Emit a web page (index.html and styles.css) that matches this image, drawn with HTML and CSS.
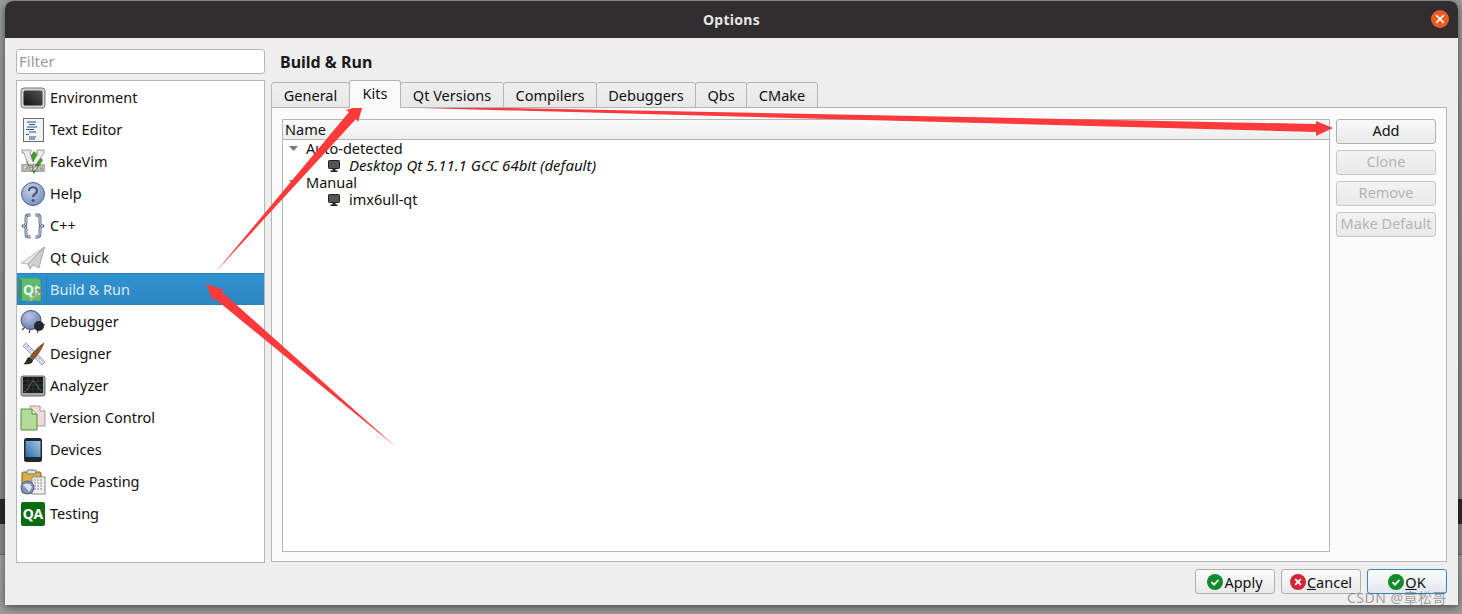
FILE: index.html
```html
<!DOCTYPE html>
<html lang="en">
<head>
<meta charset="utf-8">
<title>Options</title>
<link rel="stylesheet" href="styles.css">
</head>
<body>
<div class="window">
  <header class="titlebar">
    <span class="title">Options</span>
    <span class="close"><svg width="18" height="18" viewBox="0 0 18 18"><circle cx="9" cy="9" r="9" fill="#ee5a24"/><path d="M5.600 5.600l6.800 6.800M12.400 5.600l-6.800 6.800" stroke="#fff" stroke-width="1.600" stroke-linecap="round"/></svg></span>
  </header>
  <div class="content">
    <div class="top">
      <aside class="sidebar">
        <input class="filter" placeholder="Filter">
        <ul class="cats">
          <li class="cat"><span class="ico"><svg width="26" height="22" viewBox="0 0 26 22"><defs><linearGradient id="scr" x1="0" y1="1" x2="1" y2="0"><stop offset="0" stop-color="#111"/><stop offset="1" stop-color="#555"/></linearGradient></defs><rect x="1" y="1" width="24" height="20" rx="3" fill="#d4d4d4" stroke="#777"/><rect x="3.500" y="3.500" width="19" height="15" rx="1.500" fill="url(#scr)"/></svg></span>Environment</li>
          <li class="cat"><span class="ico"><svg width="24" height="26" viewBox="0 0 24 26"><rect x="2.500" y="1.500" width="20" height="23" fill="#f3f3f3" stroke="#6d6d6d"/><path d="M6 5h9M8 7.500h6M6 10h10M5 12.500h8M8 15h7M5 17.500h3M8 20h7M8 22h6" stroke="#2f4f95" stroke-width="1.100"/></svg></span>Text Editor</li>
          <li class="cat"><span class="ico"><svg width="26" height="26" viewBox="0 0 26 26"><path d="M14 2l9 9-9 14-8-12z" fill="#3f9f22"/><path d="M2 1h9v2l-1 1 3 9 5-9-1-1V1h7v3l-9 13h-6L4 4H2z" fill="#ececec" stroke="#777" stroke-width=".7"/><rect x="1" y="15" width="24" height="8" fill="#666" opacity=".5"/><text class="fake" x="13" y="22" text-anchor="middle">Fake</text></svg></span>FakeVim</li>
          <li class="cat"><span class="ico"><svg width="26" height="26" viewBox="0 0 26 26"><defs><radialGradient id="hb" cx=".4" cy=".3" r=".8"><stop offset="0" stop-color="#c9d4ea"/><stop offset="1" stop-color="#7088bb"/></radialGradient></defs><circle cx="13" cy="13" r="11.500" fill="url(#hb)" stroke="#53658f"/><path d="M9 10c0-5 8-5 8 0 0 3-4 3-4 6" fill="none" stroke="#4a5573" stroke-width="2.200"/><circle cx="13" cy="19.500" r="1.500" fill="#4a5573"/></svg></span>Help</li>
          <li class="cat"><span class="ico"><svg width="24" height="26" viewBox="0 0 24 26"><g fill="none" stroke-linejoin="round"><path d="M9.500 2H7.500C5.500 2 5 3.500 5 5v5c0 1.500-1 3-3 3 2 0 3 1.500 3 3v5c0 1.500.5 3 2.500 3h2M14.500 2h2C18.500 2 19 3.500 19 5v5c0 1.500 1 3 3 3-2 0-3 1.500-3 3v5c0 1.500-.5 3-2.500 3h-2" stroke="#55618a" stroke-width="2.800"/><path d="M9.500 2H7.500C5.500 2 5 3.500 5 5v5c0 1.500-1 3-3 3 2 0 3 1.500 3 3v5c0 1.500.5 3 2.500 3h2M14.500 2h2C18.500 2 19 3.500 19 5v5c0 1.500 1 3 3 3-2 0-3 1.500-3 3v5c0 1.500-.5 3-2.500 3h-2" stroke="#dfe4ee" stroke-width="1"/></g></svg></span>C++</li>
          <li class="cat"><span class="ico"><svg width="26" height="24" viewBox="0 0 26 24"><path d="M24.500 1L1 17l7 1z" fill="#e9e9e9" stroke="#aaa" stroke-width=".8"/><path d="M24.500 1L8 18l2 5 3-4 6 3z" fill="#cfcfcf" stroke="#999" stroke-width=".8"/></svg></span>Qt Quick</li>
          <li class="cat sel"><span class="ico"><svg width="26" height="26" viewBox="0 0 26 26"><path d="M1 1h19l3 3v20H4l-3-3z" fill="#5fbb70" stroke="#3f9256" stroke-width=".6"/><path d="M1 1l3 3v20l-3-3z" fill="#3f9256"/><text class="qt" x="5" y="18">Qt</text><path d="M12 24l10-10" stroke="#b8a98e" stroke-width="2.200"/><path d="M19 12l5 5" stroke="#888" stroke-width="2"/></svg></span>Build &amp; Run</li>
          <li class="cat"><span class="ico"><svg width="26" height="26" viewBox="0 0 26 26"><defs><radialGradient id="bug" cx=".4" cy=".3" r=".8"><stop offset="0" stop-color="#b9c8e4"/><stop offset="1" stop-color="#5b72a6"/></radialGradient></defs><path d="M5 18l-3 3M10 21l-1 3M17 21l1 3M21 15l4 1" stroke="#444" stroke-width="1.200"/><ellipse cx="11" cy="11" rx="10" ry="9.500" fill="url(#bug)" stroke="#44557f"/><circle cx="19" cy="17" r="5" fill="#24272e"/></svg></span>Debugger</li>
          <li class="cat"><span class="ico"><svg width="26" height="26" viewBox="0 0 26 26"><path d="M3 5l3-3 19 19-3 3z" fill="#d5dde8" stroke="#9aa5b5"/><path d="M7 6l2-2M10 9l2-2M13 12l2-2M16 15l2-2M19 18l2-2" stroke="#8793a5"/><path d="M24 2c-5 3-11 9-14 14l3 3C17 15 22 8 24 2z" fill="#8a5a2b" stroke="#5e3a18" stroke-width=".6"/><path d="M9 16c-3 1-2 5-6 7 5 1 10 0 10-4z" fill="#2b2a28"/></svg></span>Designer</li>
          <li class="cat"><span class="ico"><svg width="26" height="24" viewBox="0 0 26 24"><rect x="1" y="2" width="24" height="20" rx="2" fill="#a8a8a8" stroke="#666"/><rect x="3" y="3" width="20" height="16" fill="#1a1c1e"/><path d="M3 7h20M3 11h20M3 15h20M8 3v16M13 3v16M18 3v16" stroke="#3b4a44" stroke-width=".6"/><path d="M4 18c5-1 6-10 9-11 3 0 4 8 9 10" fill="none" stroke="#6f7f78" stroke-width=".8"/></svg></span>Analyzer</li>
          <li class="cat"><span class="ico"><svg width="26" height="26" viewBox="0 0 26 26"><path d="M10 1h10l5 5v15H10z" fill="#ecdcdc" stroke="#a99"/><path d="M20 1v5h5" fill="#fff" stroke="#a99"/><path d="M1 4h11l5 5v16H1z" fill="#b3dc97" stroke="#5c8a49"/><path d="M12 4v5h5" fill="#e2f2d6" stroke="#5c8a49"/></svg></span>Version Control</li>
          <li class="cat"><span class="ico"><svg width="20" height="26" viewBox="0 0 20 26"><defs><linearGradient id="dev" x1="0" y1="1" x2="1" y2="0"><stop offset="0" stop-color="#2e6ea8"/><stop offset="1" stop-color="#9cc6e6"/></linearGradient></defs><rect x="1" y="1" width="18" height="24" rx="2.500" fill="#23272c"/><rect x="2.500" y="4" width="15" height="16" fill="url(#dev)"/></svg></span>Devices</li>
          <li class="cat"><span class="ico"><svg width="26" height="26" viewBox="0 0 26 26"><rect x="2" y="3" width="19" height="21" rx="1.500" fill="#dcb042" stroke="#6c5a24"/><rect x="7" y="1" width="9" height="4" rx="1" fill="#ddd" stroke="#777"/><rect x="12" y="8" width="13" height="17" fill="#f1f1f1" stroke="#888"/><path d="M14 11h9M14 14h9M14 17h9M14 20h9" stroke="#888" stroke-dasharray="2 1"/><circle cx="7.500" cy="18.500" r="6.500" fill="#7f93bd" stroke="#4e5c80"/><path d="M3 16c3-2 5 0 7-1l2 3-3 5-3-4z" fill="#dfe5ef"/></svg></span>Code Pasting</li>
          <li class="cat"><span class="ico"><svg width="24" height="24" viewBox="0 0 24 24"><rect width="24" height="24" rx="2" fill="#0b6b12"/><text class="qa" x="12" y="17" text-anchor="middle">QA</text></svg></span>Testing</li>
        </ul>
      </aside>
      <main class="main">
        <h1 class="heading">Build &amp; Run</h1>
        <nav class="tabs">
          <span class="tab">General</span>
          <span class="tab active">Kits</span>
          <span class="tab">Qt Versions</span>
          <span class="tab">Compilers</span>
          <span class="tab">Debuggers</span>
          <span class="tab">Qbs</span>
          <span class="tab">CMake</span>
        </nav>
        <section class="pane">
          <div class="tree">
            <div class="tree-head">Name</div>
            <div class="row lvl0"><svg class="tri" width="9" height="5" viewBox="0 0 9 5"><path d="M0 0h9L4.500 5z" fill="#777"/></svg>Auto-detected</div>
            <div class="row lvl1 italic"><svg class="mon" width="12" height="12" viewBox="0 0 12 12"><rect x=".5" y=".5" width="11" height="8" rx=".8" fill="#555" stroke="#222"/><path d="M4.500 9h3v1.500H9.500V12h-7v-1.500h2z" fill="#222"/></svg>Desktop Qt 5.11.1 GCC 64bit (default)</div>
            <div class="row lvl0"><svg class="tri" width="9" height="5" viewBox="0 0 9 5"><path d="M0 0h9L4.500 5z" fill="#777"/></svg>Manual</div>
            <div class="row lvl1"><svg class="mon" width="12" height="12" viewBox="0 0 12 12"><rect x=".5" y=".5" width="11" height="8" rx=".8" fill="#555" stroke="#222"/><path d="M4.500 9h3v1.500H9.500V12h-7v-1.500h2z" fill="#222"/></svg>imx6ull-qt</div>
          </div>
          <div class="side-btns">
            <button class="btn">Add</button>
            <button class="btn off">Clone</button>
            <button class="btn off">Remove</button>
            <button class="btn off">Make Default</button>
          </div>
        </section>
      </main>
    </div>
    <footer class="actions">
      <button class="btn act"><svg width="16" height="16" viewBox="0 0 16 16"><circle cx="8" cy="8" r="8" fill="#128a2c"/><path d="M4.500 8.200l2.500 2.500 4.500-4.700" fill="none" stroke="#fff" stroke-width="1.800"/></svg>Apply</button>
      <button class="btn act"><svg width="16" height="16" viewBox="0 0 16 16"><circle cx="8" cy="8" r="8" fill="#d3243a"/><path d="M5.200 5.200l5.600 5.600M10.800 5.200l-5.600 5.600" stroke="#fff" stroke-width="1.800"/></svg><span><u>C</u>ancel</span></button>
      <button class="btn act ok"><svg width="16" height="16" viewBox="0 0 16 16"><circle cx="8" cy="8" r="8" fill="#128a2c"/><path d="M4.500 8.200l2.500 2.500 4.500-4.700" fill="none" stroke="#fff" stroke-width="1.800"/></svg><span><u>O</u>K</span></button>
    </footer>
  </div>
</div>
<svg class="arrows" width="1462" height="614" viewBox="0 0 1462 614">
  <path d="M216 271.500L349 112l-3-2 17-5-5 17-2-3z" fill="#fc3a3c"/>
  <path d="M206 284l17.500 5.500-1.500 2.500L396 447 214 298l-1 3z" fill="#fc3a3c"/>
  <path d="M383 105.500L1316 124v-3l17 7-17 8v-4L383 107z" fill="#fc3a3c"/>
</svg>
<span class="mark">CSDN @章松哥</span>
</body>
</html>
```
FILE: styles.css
```css
* { box-sizing: border-box; }
html, body { margin: 0; height: 100%; }
body {
  width: 1462px;
  height: 614px;
  overflow: hidden;
  padding: 1px 4px 9px 5px;
  position: relative;
  font: 14.500px/1 "Noto Sans", sans-serif;
  color: #101010;
  background: linear-gradient(180deg, #9c9c9c 0, #8a8a8a 499px, #2b2b2b 499px, #2b2b2b 524px, #8c8c8c 524px, #8c8c8c 554px, #6e6e6e 554px, #6e6e6e 555px, #a4a4a4 555px, #9a9a9a 614px);
}
.window {
  height: 100%;
  display: flex;
  flex-direction: column;
  background: #eeeeee;
  border-radius: 8px 8px 0 0;
  box-shadow: 0 2px 9px rgba(0, 0, 0, .55);
  overflow: hidden;
}
.titlebar {
  flex: 0 0 37px;
  background: #302e2e;
  display: flex;
  align-items: center;
  justify-content: center;
  position: relative;
}
.title { color: #e6e6e6; font-weight: 700; font-size: 14px; letter-spacing: .3px; }
.close { position: absolute; right: 9px; top: 9px; height: 18px; }
.content { flex: 1; display: flex; flex-direction: column; gap: 6px; padding: 11px; }
.top { flex: 1; display: flex; gap: 6px; min-height: 0; }
.sidebar { flex: 0 0 249px; display: flex; flex-direction: column; gap: 6px; }
.filter {
  height: 25px;
  padding: 0 2px 2px;
  border: 1px solid #b5b5b5;
  border-radius: 3px;
  background: #fff;
  font: 15px "Noto Sans", sans-serif;
  outline: none;
}
.filter::placeholder { color: #9a9a9a; opacity: 1; }
.cats { flex: 1; margin: 0; padding: 0; list-style: none; background: #fff; border: 1px solid #b5b5b5; }
.cat { height: 32px; display: flex; align-items: center; position: relative; }
.ico { flex: 0 0 33px; height: 32px; display: flex; align-items: center; justify-content: center; padding: 1px 2px 0 0; }
.sel { background: linear-gradient(180deg, #3193d3, #2c87bf); color: #dcebf5; box-shadow: inset 0 1px #2b7fb5, inset 0 -1px #2b7fb5; }
.sel .ico { border-right: 1px solid #2b7fb5; padding-right: 1px; flex-basis: 30px; margin-right: 3px; }
.fake { font: 700 8.500px "Noto Sans", sans-serif; fill: #fff; stroke: #444; stroke-width: .3px; }
.qt { font: 700 14px "Noto Sans", sans-serif; fill: #e8f6ea; }
.qa { font: 700 14px "Noto Sans", sans-serif; fill: #fff; }
.main { flex: 1; display: flex; flex-direction: column; min-width: 0; margin-bottom: 1px; }
.heading { margin: 0; flex: 0 0 33px; padding: 5px 0 0 9px; font-size: 16px; font-weight: 700; color: #1a1a1a; line-height: 17px; }
.tabs {
  flex: 0 0 26px;
  display: grid;
  grid-template-columns: 78px 51px 103px 93px 99px 51px 71px;
  justify-content: start;
  position: relative;
  z-index: 1;
  margin-bottom: -1px;
}
.tab {
  display: flex;
  align-items: center;
  justify-content: center;
  height: 26px;
  margin-right: -1px;
  border: 1px solid #b5b5b5;
  border-radius: 3px 3px 0 0;
  background: linear-gradient(180deg, #eeeeee, #e8e8e8);
}
.tab.active {
  margin-top: -2px;
  height: 28px;
  padding-bottom: 2px;
  background: #fbfbfb;
  border-bottom-color: #fbfbfb;
  position: relative;
}
.pane {
  flex: 1;
  display: flex;
  gap: 6px;
  padding: 11px 10px 9px;
  background: #fbfbfb;
  border: 1px solid #b5b5b5;
}
.tree { flex: 1; background: #fff; border: 1px solid #b5b5b5; }
.tree-head {
  height: 20px;
  padding: 2px 2px 0;
  background: linear-gradient(180deg, #fbfbfb, #ededed);
  border-bottom: 1px solid #b5b5b5;
}
.row { height: 17px; display: flex; align-items: center; white-space: nowrap; }
.lvl0 { padding-left: 6px; }
.lvl1 { padding-left: 45px; }
.tri { margin-right: 8px; }
.mon { margin-right: 9px; }
.italic { font-style: italic; font-size: 15px; }
.side-btns { flex: 0 0 100px; display: flex; flex-direction: column; gap: 6px; }
.btn {
  height: 25px;
  padding: 0 0 3px;
  border: 1px solid #b0b0b0;
  border-radius: 3px;
  background: linear-gradient(180deg, #fafafa, #e9e9e9);
  color: #101010;
  font: 14.500px "Noto Sans", sans-serif;
  white-space: nowrap;
}
.off { color: #b4b4b4; border-color: #c6c6c6; background: linear-gradient(180deg, #f2f2f2, #e9e9e9); }
.actions { flex: 0 0 25px; display: flex; justify-content: flex-end; gap: 6px; }
.act { width: 80px; display: flex; align-items: center; justify-content: center; gap: 1px; padding: 0; }
.ok { border-color: #3a85b5; background: linear-gradient(180deg, #fdfdfd, #dfe7ee); }
.arrows { position: absolute; left: 0; top: 0; pointer-events: none; }
.mark {
  position: absolute;
  left: 1347px;
  top: 590px;
  font: 14px/16px "Noto Sans", "Noto Sans CJK SC", sans-serif;
  color: rgba(105, 105, 105, .62);
  letter-spacing: .5px;
}
```
